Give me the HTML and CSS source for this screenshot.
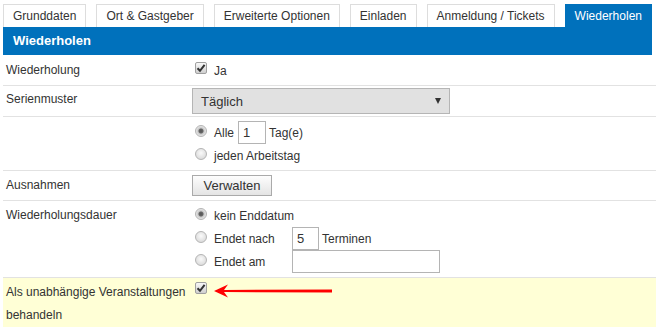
FILE: index.html
```html
<!DOCTYPE html>
<html lang="de">
<head>
  <meta charset="UTF-8" />
  <meta name="viewport" content="width=device-width, initial-scale=1.0"/>
  <title>Wiederholen</title>
  <link rel="stylesheet" href="styles.css">
</head>
<body>
  <div class="page">
    <div class="tabs">
      <div class="tab">Grunddaten</div>
      <div class="tab">Ort &amp; Gastgeber</div>
      <div class="tab">Erweiterte Optionen</div>
      <div class="tab">Einladen</div>
      <div class="tab">Anmeldung / Tickets</div>
      <div class="tab active">Wiederholen</div>
    </div>
    <div class="panel-head">Wiederholen</div>

    <div class="form">
      <div class="row">
        <div class="label">Wiederholung</div>
        <div class="value">
          <div class="line">
            <span class="cb"><svg width="10" height="10" viewBox="0 0 10 10"><path d="M1.5 5.2 L4 7.8 L8.6 1.8" fill="none" stroke="#333" stroke-width="2"/></svg></span>
            <span>Ja</span>
          </div>
        </div>
      </div>

      <div class="row row-select">
        <div class="label">Serienmuster</div>
        <div class="value">
          <div class="select">
            <span>Täglich</span>
            <span class="caret"></span>
          </div>
        </div>
      </div>

      <div class="row row-options">
        <div class="label"></div>
        <div class="value">
          <div class="line">
            <span class="rb checked"></span>
            <span>Alle</span>
            <span class="field small">1</span>
            <span>Tag(e)</span>
          </div>
          <div class="line">
            <span class="rb"></span>
            <span>jeden Arbeitstag</span>
          </div>
        </div>
      </div>

      <div class="row">
        <div class="label">Ausnahmen</div>
        <div class="value">
          <div class="line">
            <span class="btn">Verwalten</span>
          </div>
        </div>
      </div>

      <div class="row row-duration">
        <div class="label">Wiederholungsdauer</div>
        <div class="value">
          <div class="line">
            <span class="rb checked"></span>
            <span>kein Enddatum</span>
          </div>
          <div class="line">
            <span class="rb"></span>
            <span class="opt">Endet nach</span>
            <span class="field small">5</span>
            <span>Terminen</span>
          </div>
          <div class="line">
            <span class="rb"></span>
            <span class="opt">Endet am</span>
            <span class="field wide"></span>
          </div>
        </div>
      </div>

      <div class="row highlight">
        <div class="label">Als unabhängige Veranstaltungen behandeln</div>
        <div class="value">
          <div class="line top">
            <span class="cb"><svg width="10" height="10" viewBox="0 0 10 10"><path d="M1.5 5.2 L4 7.8 L8.6 1.8" fill="none" stroke="#333" stroke-width="2"/></svg></span>
            <svg class="arrow" width="120" height="16" viewBox="0 0 120 16">
              <path d="M0 8 L14 1.5 L10 7 L118 6.5 L118 9.5 L10 9 L14 14.5 Z" fill="#f00"/>
            </svg>
          </div>
        </div>
      </div>
    </div>
  </div>
</body>
</html>
```

FILE: styles.css
```css
html, body {
  margin: 0;
  padding: 0;
  background: #fff;
}

body {
  font-family: "Liberation Sans", Arial, sans-serif;
  font-size: 12px;
  color: #333;
  overflow: hidden;
}

.page {
  padding-top: 4px;
  margin-left: 3px;
}

.tabs {
  display: flex;
  gap: 10px;
}

.tab {
  height: 22px;
  line-height: 22px;
  padding: 0 9px;
  border: 1px solid #ddd;
  border-bottom: none;
  background: #fff;
  color: #333;
  white-space: nowrap;
}

.tab.active {
  background: #0071bc;
  border-color: #0071bc;
  color: #fff;
}

.panel-head {
  height: 28px;
  line-height: 28px;
  margin-right: 4px;
  padding-left: 10px;
  background: #0071bc;
  color: #fff;
  font-size: 13px;
  font-weight: bold;
}

.row {
  display: grid;
  grid-template-columns: 189px 1fr;
  padding: 3px 0;
  border-bottom: 1px solid #e2e2e2;
}

.row:first-child {
  padding: 4px 0 3px;
}

.row.row-select {
  padding: 2px 0;
}

.row.row-options {
  padding: 4px 0 3px;
}

.row.row-duration {
  padding: 3px 0 4px;
}

.row.highlight {
  background: #ffffd6;
  border-bottom: none;
  padding-bottom: 10px;
}

.label {
  padding-left: 3px;
  line-height: 23px;
}

.line {
  display: flex;
  align-items: center;
  height: 23px;
  white-space: nowrap;
}

.line.top {
  align-items: flex-start;
}

.cb {
  display: inline-flex;
  align-items: center;
  justify-content: center;
  width: 10px;
  height: 10px;
  margin: 0 7px 5px 3px;
  border: 1px solid #a0a0a0;
  border-radius: 2px;
  background: linear-gradient(#f8f8f8, #cfcfcf);
}

.line.top .cb {
  margin-top: 1px;
}

.rb {
  display: inline-block;
  box-sizing: border-box;
  width: 12px;
  height: 12px;
  margin: 0 7px 4px 3px;
  border: 1px solid #b4b4b4;
  border-radius: 50%;
  background: radial-gradient(circle at 50% 40%, #fafafa, #d2d2d2);
}

.rb.checked {
  background: radial-gradient(circle, #555 0, #666 2px, #c8c8c8 3px, #e8e8e8 5px);
}

.select {
  box-sizing: border-box;
  display: flex;
  align-items: center;
  justify-content: space-between;
  width: 258px;
  height: 26px;
  padding: 0 8px 0 8px;
  border: 1px solid #b5b5b5;
  background: #e1e1e1;
  font-size: 13px;
}

.caret {
  width: 0;
  height: 0;
  border-left: 3px solid transparent;
  border-right: 3px solid transparent;
  border-top: 6px solid #333;
}

.field {
  box-sizing: border-box;
  display: inline-block;
  height: 23px;
  line-height: 21px;
  padding-left: 4px;
  border: 1px solid #b4b4b4;
  background: #fff;
  font-size: 13px;
}

.field.small {
  width: 28px;
  margin: 0 3px 0 4px;
}

.opt {
  width: 78px;
}

.opt + .field.small {
  width: 27px;
  margin-left: 0;
}

.field.wide {
  width: 148px;
}

.btn {
  box-sizing: border-box;
  display: inline-block;
  width: 80px;
  height: 21px;
  line-height: 19px;
  text-align: center;
  border: 1px solid #aaa;
  background: linear-gradient(#fdfdfd, #e4e4e4);
  font-size: 13px;
}

.arrow {
  margin-top: 2px;
}
```
